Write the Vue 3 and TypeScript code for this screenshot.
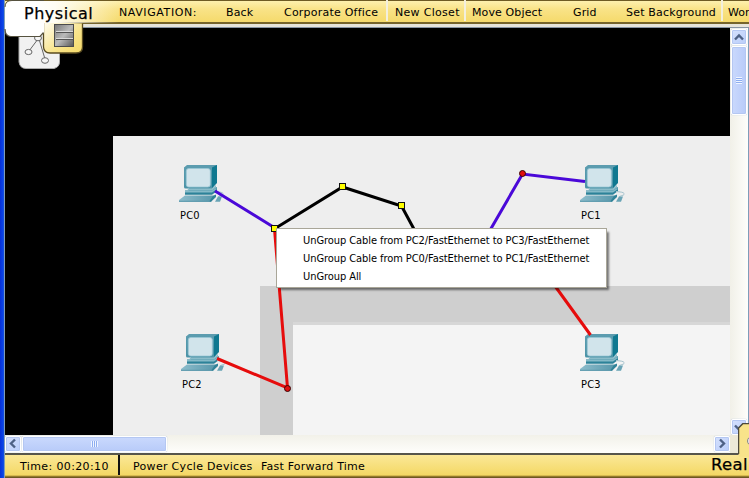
<script setup lang="ts">
interface Pc { name: string; x: number; y: number; lx: number }
interface Point { x: number; y: number }
interface NavItem { text: string; cls: string; divider?: boolean }

const nav: NavItem[] = [
  { text: 'NAVIGATION:', cls: 'n-title' },
  { text: 'Back', cls: 'n-back' },
  { text: 'Corporate Office', cls: 'n-office', divider: true },
  { text: 'New Closet', cls: 'n-closet', divider: true },
  { text: 'Move Object', cls: 'n-move' },
  { text: 'Grid', cls: 'n-grid' },
  { text: 'Set Background', cls: 'n-bg', divider: true },
  { text: 'Wor', cls: 'n-work' },
]
const pcs: Pc[] = [
  { name: 'PC0', x: 179, y: 165, lx: 180 },
  { name: 'PC1', x: 580, y: 165, lx: 581 },
  { name: 'PC2', x: 181, y: 334, lx: 182 },
  { name: 'PC3', x: 580, y: 334, lx: 581 },
]
const handles: Point[] = [{ x: 274.5, y: 228.5 }, { x: 342.5, y: 186.5 }, { x: 401.5, y: 205.5 }]
const bends: Point[] = [{ x: 522.5, y: 173.5 }, { x: 287.5, y: 388.5 }]
const menu: string[] = [
  'UnGroup Cable from PC2/FastEthernet to PC3/FastEthernet',
  'UnGroup Cable from PC0/FastEthernet to PC1/FastEthernet',
  'UnGroup All',
]
</script>

<template>
  <div class="window">
    <header class="topbar">
      <h1 class="mode">Physical</h1>
      <nav class="nav">
        <span v-for="n in nav" :key="n.text" class="nav-item" :class="[n.cls, { divider: n.divider }]">{{ n.text }}</span>
      </nav>
    </header>

    <main class="workspace">
      <svg class="canvas" width="725" height="407" viewBox="5 28 725 407">
        <defs>
          <linearGradient id="face" x1="0" y1="0" x2="0" y2="1"><stop offset="0" stop-color="#5a9caf" /><stop offset="1" stop-color="#4b93a7" /></linearGradient>
          <linearGradient id="keys" x1="0" y1="0" x2="1" y2="0"><stop offset="0" stop-color="#8dbccb" /><stop offset="1" stop-color="#5495a9" /></linearGradient>
          <g id="pc">
            <path d="M5 2.5 8 0H38V17L33 24H10Z" fill="#5c9caf" />
            <path d="M33 2.5 38 0V18L33 23Z" fill="#0f7890" />
            <rect x="5" y="2" width="28" height="21.5" rx="1.5" fill="url(#face)" />
            <rect x="7.3" y="3.5" width="24" height="18.5" rx="2.5" fill="#d1e4eb" stroke="#9cc8d6" stroke-width=".8" />
            <path d="M8 23.5H33L37 20V23L33 26H10Z" fill="#8abcc9" />
            <path d="M6 25.5H33L38 22V26L33 29.7H6Z" fill="#2c8299" />
            <path d="M6 25.5H33L37 23L38 24L33 27.5H6Z" fill="#85bac8" />
            <path d="M6 30.5H37L32 36.7H0V35Z" fill="url(#keys)" />
            <path d="M34 31L37 29.5V32L32 36.7H30Z" fill="#318398" />
            <path d="M0 36.3H31" stroke="#5796aa" stroke-width="1" />
            <path d="M36 26.5C40 27 45 27 44 29.5C43.5 31 40 30 39.5 32" fill="none" stroke="#a5c3cd" stroke-width="1" />
            <path d="M39 31.5H43L41 36.7H36Z" fill="#69a4b6" />
          </g>
        </defs>
        <rect x="113" y="136" width="617" height="299" fill="#eee" />
        <rect x="260" y="286" width="470" height="149" fill="#cfcfcf" />
        <rect x="293" y="322" width="437" height="3" fill="#d7d7d7" />
        <rect x="293" y="325" width="437" height="110" fill="#f4f4f4" />
        <use v-for="p in pcs" :key="p.name" href="#pc" :x="p.x" :y="p.y" />
        <g fill="none" stroke-width="3">
          <path d="M215 191 275 228M489 232 522.5 174 585 181.5" stroke="#4a08d8" />
          <path d="M274.5 229 287.5 388 217 358.5M555 286 590.5 335" stroke="#e60c0c" />
          <path d="M275 228.5 342.5 187 401.5 206 415 231" stroke="#000" />
        </g>
        <rect v-for="(h, i) in handles" :key="i" :x="h.x - 3" :y="h.y - 3" width="6" height="6" fill="#ff0" stroke="#111" />
        <circle v-for="(b, i) in bends" :key="'b' + i" :cx="b.x" :cy="b.y" r="3" fill="#e00f0f" stroke="#3a0505" />
        <text v-for="p in pcs" :key="'t' + p.name" class="label" :x="p.lx" :y="p.y + 54" textLength="19.5">{{ p.name }}</text>
      </svg>

      <div class="vscroll">
        <span class="btn"><svg width="14" height="15" viewBox="0 0 14 15"><path d="M3 9.5 7 5.5 11 9.5" /></svg></span>
        <span class="vthumb"><i class="grip-v"></i></span>
        <span class="space"></span>
        <span class="btn"><svg width="14" height="15" viewBox="0 0 14 15"><path d="M3 5.5 7 9.5 11 5.5" /></svg></span>
      </div>
      <div class="hscroll">
        <span class="btn"><svg width="14" height="15" viewBox="0 0 14 15"><path d="M9 3.5 5 7.5 9 11.5" /></svg></span>
        <span class="hthumb"><i class="grip-h"></i></span>
        <span class="space"></span>
        <span class="btn"><svg width="14" height="15" viewBox="0 0 14 15"><path d="M5 3.5 9 7.5 5 11.5" /></svg></span>
      </div>
      <div class="corner"></div>
    </main>

    <footer class="status">
      <span class="time">Time: 00:20:10</span>
      <span class="cycle">Power Cycle Devices</span>
      <span class="fast">Fast Forward Time</span>
      <span class="real">Real</span>
    </footer>

    <svg class="tabs" width="90" height="72" viewBox="0 0 90 72">
      <defs>
        <linearGradient id="ty" x1="0" y1="0" x2="1" y2="1"><stop offset="0" stop-color="#fffdf3" /><stop offset="0.6" stop-color="#f9e48b" /><stop offset="1" stop-color="#f4d967" /></linearGradient>
        <linearGradient id="tg" x1="0" y1="0" x2="1" y2="1"><stop offset="0" stop-color="#777" /><stop offset="0.5" stop-color="#bbb" /><stop offset="1" stop-color="#555" /></linearGradient>
      </defs>
      <path d="M19 30V62Q20 68.500 26 68.500H54Q59.500 67 59.500 62V40H45V34Z" fill="#f1f1f1" stroke="#aaa" />
      <g fill="#f6f6f6" stroke="#666" stroke-width="1">
        <path d="M38 39 29 51M39 39 45 59" />
        <ellipse cx="38" cy="38" rx="3.5" ry="2.8" /><ellipse cx="28.5" cy="52" rx="3.5" ry="2.6" /><ellipse cx="45" cy="60.5" rx="3.5" ry="2.8" />
      </g>
      <path d="M43.5 22V47Q44 53 50 53H76Q82.5 53 82.5 47V23.500" fill="url(#ty)" stroke="#594b20" stroke-width="1.3" />
      <path d="M5 8Q5 .5 12 .5H44V32.500L40 36.500H11Q5 36 5 29Z" fill="#fff" />
      <path d="M5 29Q5 36.500 11 36.500H40L43.500 32.500" fill="none" stroke="#56523f" stroke-width="1.2" />
      <path d="M5 7Q5 .5 12 .5H44" fill="none" stroke="#56523f" />
      <rect x="54.500" y="24.500" width="19" height="22" fill="url(#tg)" stroke="#4c4c4c" />
      <path d="M56 31.500H73M56 38.500H73" stroke="#d9d9d9" />
      <path d="M56 32.500H73M56 39.500H73" stroke="#555" />
    </svg>

    <svg class="realtab" width="11" height="34" viewBox="738 423 11 34">
      <path d="M738.5 458V428L743 423.500H750V458Z" fill="#f8e38a" />
      <path d="M738.5 454V428L743 423.500H750" fill="none" stroke="#4d4a3c" stroke-width="1.5" />
      <circle cx="752" cy="441" r="4.500" fill="#e8e8e8" stroke="#888" />
    </svg>

    <ul class="menu">
      <li v-for="m in menu" :key="m">{{ m }}</li>
    </ul>
  </div>
</template>

<style>
body { margin: 0; overflow: hidden; }
</style>

<style scoped>
.window {
  position: relative; box-sizing: border-box; width: 749px; height: 478px; overflow: hidden;
  display: flex; flex-direction: column; padding-left: 5px;
  background: linear-gradient(90deg, #0831d9 0, #0b45e8 3px, #1a55dd 4px, #7f9db9 4px, #7f9db9 5px, #ece9d8 5px);
  font-family: "DejaVu Sans", Verdana, sans-serif; font-size: 11px; color: #000;
}
.topbar {
  box-sizing: border-box; flex: 0 0 28px; display: flex; overflow: hidden; white-space: nowrap;
  background: linear-gradient(#6e5b24 0 1px, #fdf0ae 1px, #f9e388 9px, #f5da6c 22px, #75642b 22px 24px, #e6e4da 24px 27px, #8794a2 27px);
}
.mode {
  position: relative; z-index: 2; margin: 1px 0 0; flex: 0 0 114px; box-sizing: border-box; height: 22px; padding-left: 19px;
  font-size: 16px; line-height: 25px; font-weight: 400; letter-spacing: .52px; -webkit-text-stroke: .25px #000;
  background: linear-gradient(90deg, rgba(255, 255, 255, 0) 10px, #fff 12px, #fff 30px, #fffdf4 50px, rgba(255, 253, 244, 0));
}
.nav { display: flex; flex: none; height: 24px; line-height: 25px; letter-spacing: .12px; }
.nav-item { flex: none; box-sizing: border-box; height: 21px; }
.divider { border-right: 2px solid #f3efdd; margin-right: 6px; }
.n-title { width: 107px; letter-spacing: .6px; }
.n-back { width: 58px; }
.n-office { width: 104px; letter-spacing: .22px; }
.n-closet { width: 71px; margin-left: 1px; letter-spacing: .3px; }
.n-move { width: 101px; }
.n-grid { width: 53px; }
.n-bg { width: 97px; letter-spacing: .2px; }
.n-work { margin-left: -1px; letter-spacing: 0; }
.workspace {
  flex: 0 0 425px; display: grid; grid-template: 407px 18px / 725px 19px; background: #fcfcf7;
}
.canvas { display: block; background: #000; }
.label { font: 11px "DejaVu Sans Condensed", "DejaVu Sans", sans-serif; font-stretch: condensed; }
.vscroll {
  display: flex; flex-direction: column; align-items: center; box-sizing: border-box; padding: 1px 2px 0 1px;
  border-right: 1px solid #7f9db9; background: linear-gradient(90deg, #f1f0e8, #fefefb);
}
.hscroll { display: flex; align-items: center; box-sizing: border-box; padding: 0 0 1px; background: linear-gradient(#f2f1e9, #fefefb); }
.btn, .vthumb, .hthumb {
  flex: none; box-sizing: border-box; display: flex; align-items: center; justify-content: center;
  border: 1px solid #fff; border-radius: 2px; box-shadow: inset 0 0 0 1px #b4c7f2, 0 0 1px #8fa9d8;
  background: linear-gradient(135deg, #d5e1fd, #b9cdfa);
}
.btn { width: 16px; height: 16px; }
.btn path { fill: none; stroke: #4d6185; stroke-width: 2.4; }
.vthumb { width: 16px; height: 69px; margin-top: 1px; background: linear-gradient(90deg, #cad9fd, #b8cbf9); }
.hthumb { width: 145px; height: 16px; margin-left: 1px; background: linear-gradient(#cad9fd, #b8cbf9); }
.space { flex: 1; }
.grip-v { width: 6px; height: 7px; background: repeating-linear-gradient(#f0f5ff 0 1px, #8cadf0 1px 2px); }
.grip-h { width: 7px; height: 6px; background: repeating-linear-gradient(90deg, #f0f5ff 0 1px, #8cadf0 1px 2px); }
.corner { background: #ece9d8; border-right: 1px solid #7f9db9; }
.status {
  flex: 0 0 25px; display: flex; box-sizing: border-box; height: 25px; line-height: 27px; white-space: nowrap; overflow: hidden;
  background: linear-gradient(#56554b 0 2px, #fbe897 2px, #f4d865 22px, #b99b39 23px, #6d5821 24px, #6d5821 25px);
}
.time {
  flex: none; box-sizing: border-box; width: 115px; height: 20px; margin-top: 2px; padding-left: 15px; line-height: 23px;
  border-right: 2px solid #111; letter-spacing: .38px;
}
.cycle { flex: none; width: 128px; margin-left: 13px; letter-spacing: .31px; }
.fast { flex: none; width: 450px; letter-spacing: .22px; }
.real { font-size: 16.5px; line-height: 24px; position: relative; z-index: 2; letter-spacing: .3px; -webkit-text-stroke: .25px #000; }
.tabs { position: absolute; left: 0; top: 0; }
.realtab { position: absolute; left: 738px; top: 423px; }
.menu {
  position: absolute; left: 276px; top: 228px; width: 331px; height: 60px; box-sizing: border-box; margin: 0;
  padding: 3px 0 0 26px; list-style: none; background: #fff; border: 1px solid #a9a698;
  box-shadow: 3px 3px 2px -1px rgba(0, 0, 0, .5);
  font-family: "DejaVu Sans Condensed", "DejaVu Sans", sans-serif; font-stretch: condensed; white-space: nowrap;
}
.menu li { height: 18px; line-height: 18px; letter-spacing: -.07px; }
</style>
